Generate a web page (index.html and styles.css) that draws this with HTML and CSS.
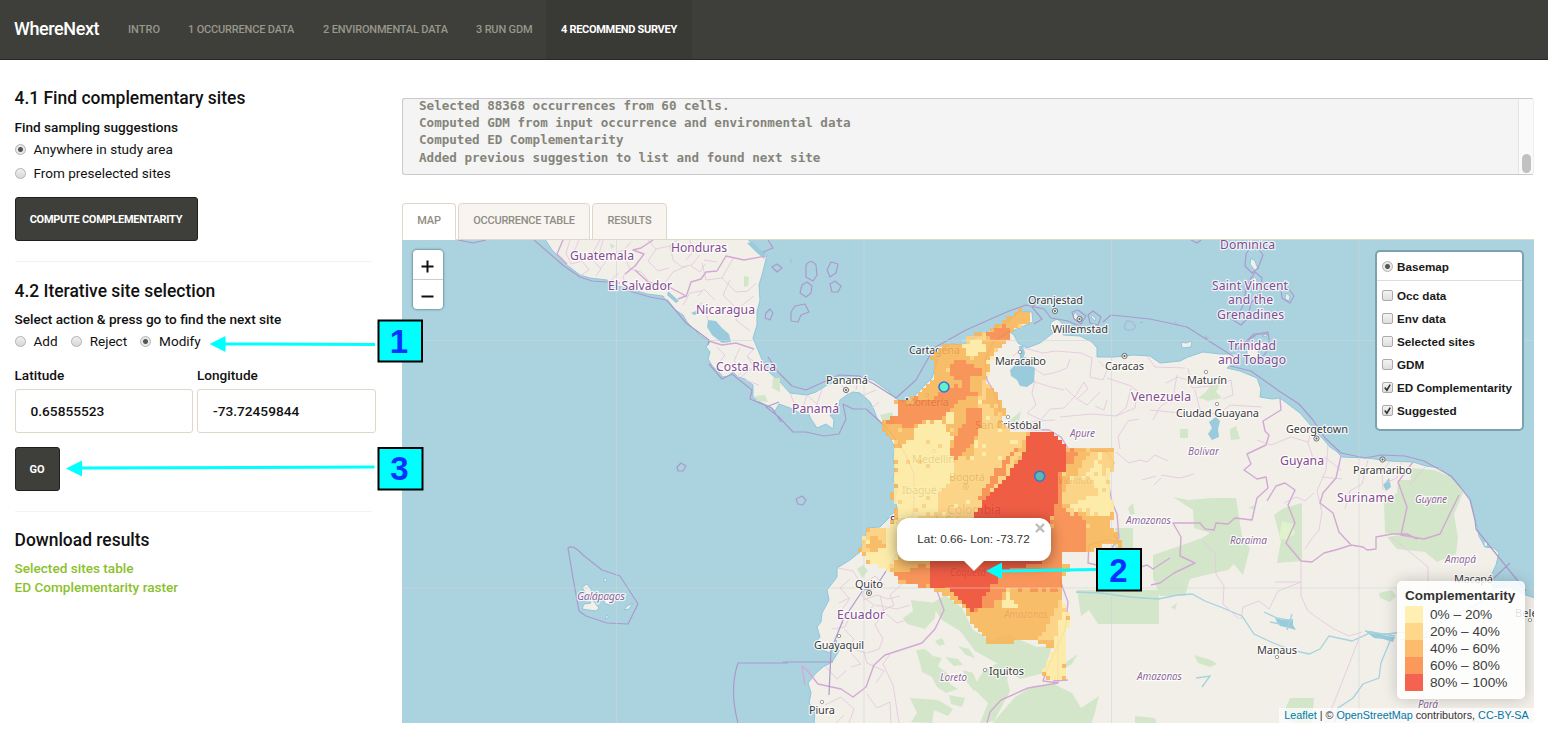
FILE: index.html
```html
<!DOCTYPE html>
<html lang="en">
<head>
<meta charset="utf-8">
<title>WhereNext</title>
<link rel="stylesheet" href="styles.css">
</head>
<body>
<nav class="navbar">
  <span class="brand">WhereNext</span>
  <a class="nav-item intro">INTRO</a>
  <a class="nav-item occ">1 OCCURRENCE DATA</a>
  <a class="nav-item env">2 ENVIRONMENTAL DATA</a>
  <a class="nav-item run">3 RUN GDM</a>
  <a class="nav-item active">4 RECOMMEND SURVEY</a>
</nav>
<div class="page">
  <aside class="sidebar">
    <h2>4.1 Find complementary sites</h2>
    <p class="label">Find sampling suggestions</p>
    <div class="choice"><i class="radio on"></i>Anywhere in study area</div>
    <div class="choice"><i class="radio"></i>From preselected sites</div>
    <button class="btn compute">COMPUTE COMPLEMENTARITY</button>
    <hr>
    <h2 class="iter">4.2 Iterative site selection</h2>
    <p class="label sel">Select action &amp; press go to find the next site</p>
    <div class="inline-choices">
      <div class="choice"><i class="radio"></i>Add</div>
      <div class="choice"><i class="radio"></i>Reject</div>
      <div class="choice"><i class="radio on"></i>Modify</div>
    </div>
    <div class="coords">
      <div class="field"><p class="label">Latitude</p><div class="input">0.65855523</div></div>
      <div class="field"><p class="label">Longitude</p><div class="input">-73.72459844</div></div>
    </div>
    <button class="btn go">GO</button>
    <hr>
    <h2 class="dl">Download results</h2>
    <a class="link">Selected sites table</a>
    <a class="link">ED Complementarity raster</a>
  </aside>
  <main class="main">
    <div class="log">
      <pre>Selected 88368 occurrences from 60 cells.
Computed GDM from input occurrence and environmental data
Computed ED Complementarity
Added previous suggestion to list and found next site</pre>
      <div class="scroll"><i class="thumb"></i></div>
    </div>
    <div class="tabs">
      <span class="tab current">MAP</span>
      <span class="tab table">OCCURRENCE TABLE</span>
      <span class="tab results">RESULTS</span>
    </div>
    <div class="map">
      <svg class="tiles" viewBox="402 240 1132 483" width="1132" height="483">
        <rect class="sea" x="402" y="240" width="1132" height="483"/>
        <g class="land">
          <path d="M543 236L552 250 567 265 580 275 590 278 607 280 617 286 627 288 647 294 663 296 667 302 674 309 683 315 687 322 693 328 701 336 710 342 706 347 710 352 708 359 713 367 718 371 723 377 728 376 733 372 738 377 745 379 753 385 753 397 760 402 770 407 775 411 779 404 790 408 800 413 808 412 811 419 817 428 826 424 833 429 834 420 830 415 838 409 840 400 847 395 853 392 860 393 866 398 870 402 874 410 877 418 882 425 890 438 895 448 893 458 895 468 893 480 898 487 895 500 897 508 890 517 880 527 867 528 865 538 860 552 850 560 837 568 837 577 827 590 829 600 822 613 821 622 817 627 820 637 815 643 823 650 830 653 832 646 836 640 839 651 832 662 823 667 816 673 808 683 811 693 809 703 815 710 813 740H1550V603L1523 594 1510 587 1493 588 1491 576 1496 565 1499 553 1494 548 1485 547 1479 536 1476 523 1473 510 1470 498 1460 487 1457 483 1448 475 1440 468 1426 466 1413 462 1390 461 1367 458 1342 457 1336 451 1330 447 1323 439 1313 428 1300 413 1280 398 1272 399 1260 397 1261 389 1257 378 1240 371 1227 368 1237 360 1237 354 1220 354 1203 352 1188 357 1180 361 1160 363 1150 356 1133 355 1115 357 1097 357 1097 348 1092 342 1080 336 1063 335 1062 323 1057 319 1051 322 1050 328 1053 333 1040 343 1027 348 1018 343 1014 335 1010 332 1033 322 1032 312 1020 311 1009 321 987 332 963 345 950 344 938 358 932 378 921 389 913 398 903 402 895 398 888 391 873 380 860 377 845 378 827 385 816 392 807 395 790 393 780 382 770 373 763 362 758 350 753 338 757 325 757 312 760 300 759 285 762 275 767 255 753 245 745 236Z"/>
          <path d="M1251 258l4 3 3 8-3 2-5-7zM1254 276l3 4-1 9-4 3-1-8zM1286 293l4 3-1 5-4-2zM1247 347l15-5 2 3-6 6 1 7-12-1zM1262 336l6-3-2 4zM1075 312l4 5-1 5-5-5zM1092 315l4 4-1 2-4-4zM1181 342l5 1 6-2-1 6-9 1zM582 587l5-3 4 5 1 10 7 9-3 3-14-2 2-5 7-1-5-9zM605 599l7 1-3 5-5-2zM627 606l6-3-4 6-5 1zM604 579l2-1 1 3-3 1zM606 616l2-1v3l-3 1zM1484 540l4 3-1 4-3-1z"/>
        </g>
        <g class="lake">
          <path d="M1021 358l5-1 3 7 6 4-1 14-7 5-7-1-3-6-6-4-1-6 7-7zM1019 346h4l2 7-2 6h-3zM708 320l8 1 6 7 7 6 2 8-9 1-10-8-5-8zM691 313l5-2 3 3-5 1zM1209 422l7-5 4 4-2 8 1 8-7 3-4-6 4-6zM747 243l6-1 6 7 7 4-2 6-8-7zM668 291l11 10-3 2-9-8zM790 256l3 8-3-2zM1275 618l8 2 10-1 0 6 3 5-7-2-9-2-3-4zM1365 631l10 1 12 4 8 1-2 5-10-3-9-1zM1383 485l6-7 2 9-5 4z"/>
        </g>
        <g class="green">
          <path d="M1173 497l15 3 24-2 24 0 6 38 8 12-7 27-9-11-6 6-18 4-20 5-5 17-25 0-7-18V555l15-5 34-12 8-5-16-5-1-18z"/>
          <path d="M1284 508l18-5v58l-25 2 4-22-7-26zM1398 480l6 0 42 0 17 13-9 21 4 24-2 16-19 8-12-10-28-3-10-12 13-2-15-2-1-32 13-8z"/>
          <path d="M1412 468l22 2 17 7 12 15-17 40-13 8-34-4 7-24z"/>
          <path d="M1077 590h82v34h-61l-9-14-8 6zM1115 528h18v20h-18zM911 600l25 3-1 15-10 11-18-5-4-6 10-7zM945 595l17 13 11 22 18 10 15-6 31 13 15-1-8 27-24 6-18-13-27-15-15-20-18-11-11-16z"/>
          <path d="M984 670l16-8 12 4-5 13 3 12-9 17-7 13-14 2 8-20-15-15zM916 650l9-1 8 7 9 2-4 8 10 8 2 10 8 5-12 4-9-6-5-10-10-5-2-9zM945 657l13 2 5 6-9 1zM963 670l10 3 6 14-5 4-8-10zM949 695l16 3-3 9-11-3zM910 698l28 2 15 9-5 7-14-6-2 13-21-1 6-9zM935 641l7-3 3 6-6 2zM958 646l11 3 6 9-9-3z"/>
          <path d="M1015 697l18-11 21-2 18 9 9 15 18-12-5 20-4 10h-100zM1290 698h24l-2 30-25-8-3-8zM1194 655l17 5 6 4-7 3-12-4zM1135 716l20 2 3 10h-23z"/>
          <path d="M1180 429h8v9h-8zM1230 429l6-3 4 13-9 1-1-6zM1198 398l8-6 4-6 10-2-4 8 6 6-14 3-5-2zM773 378h7v14l-8-4zM755 396l10-1 3 7-11-1zM1379 593l13-3 4 6-6 6-10-4zM1248 508l6-3 2 5zM1171 607l6-4-2 7zM744 276l5 1-1 9-4 1zM880 415l12-3 3 10-9 7zM1010 420l11-9-2 10-8 4zM610 243l5 3-4 3zM696 305l8-3-3 4zM701 252l7-3 1 4z"/>
          <path d="M1063 664l15-10-6 10-9 5zM1128 508l5-5 2 11-5 1zM857 569l6-4 5 6-6 7z"/>
          <path class="lime" d="M1282 521l11 3 2 10-9 6-7-2z"/>
        </g>
        <g class="river">
          <path d="M1076 592l24 1 30 4 28 2 20-4 14-1 13 7 18 7 19 8 12 18 17 8 20 8 18 4 11-5 9-13 23 5 18-8 18 1 14-2 17 5 18 1M1390 641l-9 22-2 15-16 6-10 14-15 10-3 14M1400 640l22-4 32-22 21-8 20-17 10-12M1500 586l10-5 10 5 10 3M1365 631l30 5M1196 678l14-2-8 11"/>
          <path d="M1264 612l13 6 16 3M1270 622l10 2M1287 630l5-16"/>
        </g>
        <g class="province">
          <path d="M570 240l-4 13 5 11 11-3 7 9-9 6M579 240l-5 12 8 6 10-4 8-14M603 240l-4 14-8 4 10 11-5 7M600 269l8-10 8-6 7 4M616 253l8-3 7-8M624 256l6 13 11 3 7 8-1 12M632 268l-9 8 2 8M611 280l8-7M648 240l8 9-8 12 10 10 11-3M656 249l14-3 7-6M670 245l3 15 9 7 9-2M690 240l2 13-6 7M700 255l-9 11 9 6 5-8M717 262l-13-2M664 284l9-12 14-6M683 305l7-12 12-2M702 263l4 17 16-2 5-9M722 278l14 14 12-1 8-8M727 269l7-12M730 280l-7 15 14 14-1 11 14 11M737 309l17-13M715 300l-11-11-6 7M708 320l-4-13M717 347l8 8-6 8M740 348l-6 13 9 9-6 7M754 349l-7 7 7 11-13 10M747 356l12 10M745 380l14 5M790 393l4 10 9 4 4-12M807 395l10 9-3 9M817 404l5-15M840 383l9 12M858 378l-2 12M876 390l-12 5M879 402l-7 6"/>
          <path d="M1013 356l11-8 19 5 12-2 26 2 11 5M1035 369l9 6 13-3 10-4 3-9M1092 358l-2 19 13 3 4-10-8-9M1035 380l-3 13 4 12-9 8 14 7 9-11 14-1 12-13 8-13 4 7-10 9M1065 388l11 10 11 7 13-13M1035 382l16 5 13 3M1107 378l24 8 9 7M1095 406l9 4 3-10M1060 417l31-3 25 2 19-8 2-15M1116 416l10-8 5-20M1012 428l24-7 19-1M1120 449l-2-12 10-16 11-2M1116 452l13 11 11-3 7 2 8-7 13 6"/>
          <path d="M1147 356l8 11 30 1M1166 383l12-6 22 7M1188 368l4 20 18-2 21-6 2 15-10 4M1195 390l5 20 18 5 12-10 32 2M1150 410l31 3 8 4M1177 375l-4 23-13 9-7 13M1152 401l14-4 6 6M1161 475l19 3 14-4M1161 478l-7 7M1142 480l14-4M1313 425l-5 18 5 15 13 0 15 12M1308 442l-17-5-20 8-14-5M1328 445l-2 25-9 21 5 21-3 18-9 11-5 8M1390 461l-8 11 1 18M1368 460l-6 24-12 7-5 18M1402 461l-5 17-12 5M1425 467l-15 18M1342 479l-20-2M1284 503l12-6 9 4 9-8M1203 541l12 12 1 21 8 12-1 18 16 15M1241 619l2-12 16-6 10 8 9-18 23-9M1275 582h26M1301 561v35l7 15 14 10 12 8 15 7 13-4M1360 636l-14 36-20 51M1391 537l20 16 17 14v20"/>
          <path d="M838 568l15 3 9 14 13-9 10 9M850 579l-10 9 9 10-10 5M867 580l-5 16 12 9-11 12-13-1-5 11-13 2M850 598l-9 13 2 13M863 600l14-5 11 4 12-3M880 595l4 17-9 13 8 14-4 10-12 4M904 582l-14 13 4 10-18 9M875 605l22 4 13-4M884 612l13 11 13-4M844 629l10 10-6 11 13 14-10 3M861 641l6 22 17 8-8 12M866 653l-14-4M890 654l-7 10 10 21 6 38M826 667l11 12 9-8M825 705l16-8 13 12-5 14M867 694l10 14 13-6 1 21M836 723l8-8"/>
        </g>
        <g class="border">
          <path d="M563 240l-6 14 10 10M653 240l-12 8-8 2 11 4-9 12-10 8M635 270l13 12 21 5 17 9-8 3M686 297l5-15 10-3 5-7 11-1 9-15 18 4 22-4M709 341l13 4 14-2 18 6"/>
          <path d="M1010 331l-17 11-8 18 2 20 6 10 6 14 3 21 9 4 38 1 12 7 8 13 37 1 8 12-7 14 5 25 5 12 2 24-18 25M1113 534l7 8-14-2-17 5-1 18 13 3 10 1 20 3 16-5 6 4 17-11M1060 580l8 22-3 28-16 34-6 17 15 2v-50"/>
          <path d="M1280 398l1 12-18 11 2 10 4 4-3 10-19 9 4 10-7 6 13 9 9-2 2 11-11 10-5 22-17-2-7 6-12-1-2 7-9-1-5-6-27 0 8 14-1 19 15 7-21 10-14 10-9 2M1267 501l9-15 9-3 10 7-7 15 7 18-9 20 15 18 11 1 12-9 15-4 12-4 12 2 4 3 9-1v-12l16-3 15 0 10 5M1341 456l-5 22-13 15-3 10 13 10 6 19 13 14M1413 462l-15 20 9 25-6 28 23 4 16-5 19-39"/>
          <path d="M937 591l7 19-9 19-13 14-37 12-11 10-8 22-13 10-12-8-23-5-12-15-4-3 3 19M1058 683l-30 5-27 12-11 12-3 11M1053 681l15-1"/>
        </g>
        <g class="maritime">
          <path d="M458 240l15 3 13-3M534 240l30 26 16 11 12 4 28 2M629 291l21 6 17 3 19 23 23 17-1 5M709 364l13 15 10-5 20 16-2 9 22 9 9 14M768 357l10 15 14 14 14 4 33-15 20 1 15 8 22 14 20-18 18-32 32-18 43-19 17-6 18 4 7 9 17 3 20 9M779 402l-13 5 13 10 14 15 13 0 18 4 15-2 7-15-3-15 10 5 13 0 20 18 10 13 10 15 8 19 0 28-2 24-13 25-20 31-2 6-14 2-20 30-12 30 -2 45M783 662h50M1040 300l-8 7 10 12-8 5M1103 322l8-7 39 4 37 8 33 21 16 10M1230 366l21 5 28 20 20 13 14 16 12 18 16 15 24 5 16-3 24 1 19 5 27 15 10 12 9 12 5 20 1 9 50 62M1268 334h-14l-17 16M1492 580l18-17"/>
          <path d="M568 548q5-4 15 7l19 15 18 6 18 28-10 20-21-1-21-7-7-5-6-33zM738 723q-9-34 0-60h50M677 467l4-4 5 3-3 5-5 0zM796 499l6-3 4 4-3 5-5-1zM806 265q5-7 10 0l1 10-4 6-7-4zM827 270l4-8 7 2-2 9-6 4zM802 285l5-3 5 4-1 7-5 4-6-4zM830 284l5-3 6 5-3 6-6 0zM791 312l4-6 10-2 4 8-8 3-3 7-7-1zM768 240l5 8-10 4M772 267l5-3 5 4-5 4zM766 313l4-4 3 4-3 7-5-2zM1246 254l4-6h8l5 7-5 13-6 5-7-7zM1251 278l4-6 7 6-2 15-9 10-4 16-6 6-8-5 9-12 5-22zM1281 289l7-1 6 8-4 7-8-5zM1072 312l6-2 8 6-5 8-7-5zM1088 315l5-4 8 6-3 8-8-2zM1191 240l6 3 4-3M1247 342l10-8 11-2 2 15-12 16"/>
          <path class="faint" d="M1126 322q4-3 8 2t-4 6-4-8M1140 323l3-1M1175 322l2 3M1205 336l3 3"/>
        </g>
        <g class="grat"><path d="M402 340.5h1132M402 588h1132M616.5 240v483M864 240v483M1111.5 240v483M1359 240v483"/></g>
        <g class="names country">
          <text x="570" y="260" textLength="64">Guatemala</text><text x="671" y="252" textLength="56">Honduras</text><text x="608" y="290" textLength="64">El Salvador</text><text x="696" y="314" textLength="59">Nicaragua</text><text x="716" y="371" textLength="60">Costa Rica</text><text x="792" y="413" textLength="47">Panamá</text><text x="1131" y="401" textLength="60">Venezuela</text><text x="1280" y="465" textLength="44">Guyana</text><text x="1337" y="502" textLength="57">Suriname</text><text x="837" y="619" textLength="48">Ecuador</text><text x="947" y="514" textLength="54">Colombia</text><text x="1220" y="249.500" textLength="55">Dominica</text><text x="1212" y="290" textLength="76">Saint Vincent</text><text x="1228" y="304" textLength="45">and the</text><text x="1217" y="319" textLength="67">Grenadines</text><text x="1228" y="350" textLength="48">Trinidad</text><text x="1218" y="364" textLength="68">and Tobago</text>
        </g>
        <g class="names region">
          <text x="1070" y="437" textLength="25">Apure</text><text x="1188" y="455" textLength="31">Bolívar</text><text x="1058" y="484" textLength="34">Vichada</text><text x="1126" y="524" textLength="45">Amazonas</text><text x="1230" y="544" textLength="37">Roraima</text><text x="1415" y="503" textLength="32">Guyane</text><text x="1445" y="563" textLength="31">Amapá</text><text x="1137" y="680" textLength="45">Amazonas</text><text x="940" y="681" textLength="27">Loreto</text><text x="950" y="576" textLength="36">Caquetá</text><text x="1004" y="618" textLength="44">Amazonas</text><text x="1418" y="708" textLength="20">Pará</text><text class="gal" x="577" y="600" textLength="48">Galápagos</text>
        </g>
        <g class="names city">
          <text x="1028" y="304" textLength="55">Oranjestad</text><text x="1052" y="333" textLength="56">Willemstad</text><text x="909" y="354" textLength="51">Cartagena</text><text x="995" y="365" textLength="51">Maracaibo</text><text x="1105" y="370" textLength="39">Caracas</text><text x="826" y="384" textLength="42">Panamá</text><text x="905" y="406" textLength="44">Montería</text><text x="975" y="429" textLength="66">San Cristóbal</text><text x="912" y="463" textLength="43">Medellín</text><text x="949" y="481" textLength="36">Bogotá</text><text x="902" y="494" textLength="35">Ibagué</text><text x="890" y="524" textLength="71">Santiago de Cali</text><text x="1187" y="384" textLength="40">Maturín</text><text x="1176" y="417" textLength="83">Ciudad Guayana</text><text x="1286" y="433" textLength="62">Georgetown</text><text x="1353" y="474" textLength="59">Paramaribo</text><text x="855" y="588" textLength="28">Quito</text><text x="814" y="649" textLength="50">Guayaquil</text><text x="809" y="714" textLength="26">Piura</text><text x="989" y="675" textLength="35">Iquitos</text><text x="1257" y="654" textLength="40">Manaus</text><text x="1454" y="583" textLength="39">Macapá</text><text x="1515" y="617" textLength="33">Belém</text>
        </g>
        <g class="dots"><circle cx="1020" cy="352" r="1.7"/><circle cx="1008" cy="417" r="1.7"/><circle cx="1206" cy="372" r="1.7"/><circle cx="1217" cy="404" r="1.7"/><circle cx="839" cy="636" r="1.7"/><circle cx="822" cy="702" r="1.7"/><circle cx="985" cy="670" r="1.7"/><circle cx="1277" cy="657" r="1.7"/><circle cx="1530" cy="620" r="1.7"/><circle cx="927" cy="395" r="1.7"/><circle cx="941" cy="490" r="1.7"/><circle cx="934" cy="451" r="1.7"/></g>
        <g class="capitals"><circle cx="1055" cy="311" r="2.6"/><circle cx="1079.500" cy="319" r="2.6"/><circle cx="1124.500" cy="356" r="2.6"/><circle cx="846" cy="390" r="2.6"/><circle cx="1316.500" cy="438.500" r="2.6"/><circle cx="1382.500" cy="459.500" r="2.6"/><circle cx="869" cy="593" r="2.6"/><circle cx="966" cy="487" r="2.6"/></g>
        <g class="centres"><circle cx="1055" cy="311" r="1"/><circle cx="1079.500" cy="319" r="1"/><circle cx="1124.500" cy="356" r="1"/><circle cx="846" cy="390" r="1"/><circle cx="1316.500" cy="438.500" r="1"/><circle cx="1382.500" cy="459.500" r="1"/><circle cx="869" cy="593" r="1"/><circle cx="966" cy="487" r="1"/></g>
        <g id="raster" class="raster"></g>
        <path class="rastergrid" d="M962 340.500h46M945 588h116"/>
        <g class="sites"><circle cx="944" cy="387" r="5" fill="#63efd0"/><circle cx="1039.700" cy="476.200" r="5" fill="#5fb9ab"/></g>
      </svg>
      <div class="zoomctl">
        <span><svg width="13" height="13"><path d="M6.500 .5v12M.5 6.500h12"/></svg></span>
        <span><svg width="13" height="13"><path d="M.5 6.500h12"/></svg></span>
      </div>
      <div class="popup">Lat: 0.66- Lon: -73.72<svg class="close" width="10" height="10"><path d="M1 1l8 8M9 1l-8 8"/></svg><i class="tip"></i></div>
      <div class="layers">
        <div class="base"><i class="radio on"></i>Basemap</div>
        <div class="layer"><i class="check"></i>Occ data</div>
        <div class="layer"><i class="check"></i>Env data</div>
        <div class="layer"><i class="check"></i>Selected sites</div>
        <div class="layer"><i class="check"></i>GDM</div>
        <div class="layer"><i class="check"><svg viewBox="0 0 10 10"><path d="M2 5l2.300 3L8 1.800"/></svg></i>ED Complementarity</div>
        <div class="layer"><i class="check"><svg viewBox="0 0 10 10"><path d="M2 5l2.300 3L8 1.800"/></svg></i>Suggested</div>
      </div>
      <div class="legend">
        <b>Complementarity</b>
        <div class="row"><i class="c1"></i>0% – 20%</div>
        <div class="row"><i class="c2"></i>20% – 40%</div>
        <div class="row"><i class="c3"></i>40% – 60%</div>
        <div class="row"><i class="c4"></i>60% – 80%</div>
        <div class="row"><i class="c5"></i>80% – 100%</div>
      </div>
      <div class="attrib"><a>Leaflet</a> | © <a>OpenStreetMap</a> contributors, <a>CC-BY-SA</a></div>
    </div>
  </main>
</div>
<svg class="callouts" width="1548" height="750">
  <path class="shaft" d="M224 344L375 344.500M81 468L374.500 467M1001 571L1096 569.500"/>
  <path class="head" d="M209.500 344l16-8v16zM66 468.500l16-8v16zM986 571l16-8.500v16.500z"/>
  <rect x="378.500" y="320.500" width="43.500" height="41"/><rect x="378.500" y="448" width="44" height="41.500"/><rect x="1097" y="549" width="44" height="41.500"/>
  <text x="399" y="353">1</text><text x="399.500" y="480">3</text><text x="1118.500" y="582">2</text>
</svg>
<script src="raster.js"></script>
</body>
</html>
```
FILE: styles.css
```css
* { box-sizing: border-box; }
body { margin: 0; width: 1548px; height: 750px; overflow: hidden; position: relative; background: #fff; color: #111; font-family: Roboto, sans-serif; font-size: 13px; }
h2, p, pre, hr { margin: 0; }
.navbar { display: flex; height: 60px; background: #3e3f3a; border-bottom: 1px solid #292a26; line-height: 59px; color: #98978b; font-size: 11px; font-weight: 500; letter-spacing: -.18px; }
.brand { width: 113px; padding-left: 14px; color: #fff; font-size: 18px; font-weight: 500; letter-spacing: -.4px; line-height: 57px; }
.nav-item { padding-left: 15px; white-space: nowrap; }
.intro { width: 60px; letter-spacing: 0; }
.occ { width: 135px; }
.env { width: 153px; }
.run { width: 85px; }
.active { width: 146px; background: #393a35; color: #fff; font-weight: 700; letter-spacing: -.3px; }
.page { display: flex; }
.sidebar { width: 402px; padding: 28px 0 0 14.500px; }
h2 { font-size: 17.450px; line-height: 20px; font-weight: 500; }
.label { font-size: 13.600px; line-height: 18px; font-weight: 500; margin-top: 10px; margin-bottom: 1px; }
.choice { display: flex; align-items: center; height: 24px; gap: 8px; font-size: 13.550px; }
.radio { display: block; flex: none; width: 11px; height: 11px; border-radius: 50%; border: 1px solid #b2b2b2; background: linear-gradient(#efefef, #d8d8d8); }
.radio.on { background: radial-gradient(circle, #555 0 2px, #e8e8e8 3px); }
.btn { display: block; border: 1px solid #20211e; border-radius: 3px; background: #3e3f3a; color: #fff; font: 700 11px Roboto, sans-serif; padding: 0; }
.compute { width: 183px; height: 44px; margin-top: 12px; letter-spacing: -.28px; }
hr { border: 0; height: 1px; width: 357px; background: #f5f3ef; margin-top: 20px; }
.iter { margin-top: 18.500px; }
.sel { margin-top: 9px; }
.inline-choices { display: flex; height: 24px; gap: 13px; margin-top: 1.500px; }
.coords { display: flex; gap: 4px; margin-top: 13px; }
.field { width: 178.500px; }
.field .label { margin: 0 0 5px; }
.input { height: 44px; border: 1px solid #dfd7ca; border-radius: 3px; padding-left: 15px; font-size: 13.700px; font-weight: 500; line-height: 42px; }
.go { width: 45px; height: 44px; margin-top: 14px; }
.dl { margin: 18px 0 9px; }
.link { display: block; color: #8bc12c; font-size: 13.600px; font-weight: 500; line-height: 18.500px; }
.main { width: 1132px; padding-top: 38px; }
.log { display: flex; height: 77px; border: 1px solid #cacaca; border-right-color: #eee; border-radius: 3px; background: #f4f4f4; overflow: hidden; }
.log pre { flex: 1; padding-left: 16px; font: 700 12.580px/17.200px "DejaVu Sans Mono", monospace; color: #85847a; margin-top: -2px; }
.scroll { width: 15px; background: #fafafa; border-left: 1px solid #e4e4e4; display: flex; align-items: flex-end; justify-content: center; }
.thumb { width: 9px; height: 19px; border-radius: 5px; background: #c1c1c1; margin-bottom: 1px; }
.tabs { display: flex; gap: 2px; height: 37px; margin-top: 28px; border-bottom: 1px solid #dfd7ca; }
.tab { height: 37px; border: 1px solid #dfd7ca; border-radius: 4px 4px 0 0; background: #f8f5f0; color: #8e8c84; font-size: 11px; font-weight: 500; line-height: 34px; text-align: center; letter-spacing: -.1px; }
.current { width: 54px; background: #fff; border-bottom-color: #fff; }
.table { width: 132px; letter-spacing: -.25px; }
.results { width: 75px; }
.map { position: relative; width: 1132px; height: 483px; overflow: hidden; font-family: "Liberation Sans", Arial, sans-serif; }
.tiles { display: block; height: 483px; }
.sea { fill: #abd3df; }
.land { fill: #f2efe9; stroke: #8fc6da; stroke-width: 1; }
.lake { fill: #99cbdc; }
.green { fill: #d3e6ca; }
.lime { fill: #e0f2cb; }
.river { fill: none; stroke: #a5d2df; stroke-width: 1.300; }
.province { fill: none; stroke: #e3c9e0; stroke-width: .9; }
.border { fill: none; stroke: #d3a9d3; stroke-width: 1.400; stroke-linejoin: round; }
.maritime { fill: none; stroke: #aa9acb; stroke-width: 1.200; stroke-linejoin: round; }
.faint { opacity: .5; }
.grat { fill: none; stroke: #ccd6d7; stroke-width: .8; opacity: .7; }
.names { font-family: "Noto Sans", sans-serif; paint-order: stroke; stroke: rgba(255,255,255,.75); stroke-width: 2.500px; stroke-linejoin: round; transform: translateY(-.5px); }
.country { fill: #844b90; font-size: 12.200px; }
.region { fill: #8d6599; font-size: 10.200px; font-style: italic; }
.gal { font-size: 11px; }
.city { fill: #3a3a3a; font-size: 11px; }
.dots { fill: #fff; stroke: #777; stroke-width: .7; }
.capitals { fill: #eee; stroke: #555; stroke-width: .8; }
.centres { fill: #555; }
.raster { opacity: .86; shape-rendering: crispEdges; }
.rastergrid { stroke: #fff; opacity: .2; stroke-width: 2; }
.sites { stroke: #3476d6; stroke-width: 1.600; }
.zoomctl { position: absolute; left: 11px; top: 10px; width: 29.500px; height: 59px; border-radius: 4px; background: #fff; box-shadow: 0 0 2px 1px rgba(50,80,90,.45); }
.zoomctl span { display: flex; align-items: center; justify-content: center; height: 29.500px; padding-top: 5px; }
.zoomctl span:first-child { border-bottom: 1px solid #ccc; }
.zoomctl path { stroke: #111; stroke-width: 2; }
.popup { position: absolute; left: 495px; top: 278px; width: 154px; height: 43px; border-radius: 12px; background: #fff; box-shadow: 0 3px 14px rgba(0,0,0,.4); color: #333; font-size: 11.750px; line-height: 42px; text-align: center; padding-right: 1px; }
.close { position: absolute; right: 6px; top: 5px; }
.close path { stroke: #bbb; stroke-width: 2.300; }
.tip { position: absolute; left: 67px; top: 42.500px; border: 10px solid transparent; border-top-color: #fff; border-bottom: 0; }
.layers { position: absolute; left: 973px; top: 10px; width: 149px; height: 181px; border: 2px solid #7ba2ad; border-radius: 5px; background: #fff; font-size: 11.700px; font-weight: 700; color: #1a1a1a; }
.base { display: flex; align-items: center; gap: 4px; height: 28.500px; border-bottom: 1px solid #ddd; padding: 1px 0 0 5px; margin-bottom: 3px; }
.layer { display: flex; align-items: center; gap: 4px; height: 23px; padding-left: 5px; }
.check { display: block; width: 11px; height: 11px; border: 1px solid #aaa; border-radius: 2px; background: linear-gradient(#f3f3f3, #dedede); }
.check svg { display: block; }
.check path { fill: none; stroke: #333; stroke-width: 1.800; }
.legend { position: absolute; left: 995px; top: 340.500px; width: 128px; height: 118px; padding: 6px 8px; border-radius: 5px; background: rgba(255,255,255,.85); box-shadow: 0 0 15px rgba(0,0,0,.2); color: #3c3c3c; font-size: 13.650px; line-height: 17.200px; }
.legend b { display: block; color: #333; font-size: 13.500px; height: 19px; }
.row { display: flex; height: 17.200px; }
.row i { width: 18px; height: 17.200px; margin-right: 7px; }
.c1 { background: #ffefb0; }
.c2 { background: #fed78b; }
.c3 { background: #fdbc6d; }
.c4 { background: #fb985b; }
.c5 { background: #f36350; }
.attrib { position: absolute; right: 0; bottom: 0; height: 15px; width: 255px; background: rgba(255,255,255,.7); color: #333; font-size: 10.800px; line-height: 14px; text-align: center; white-space: nowrap; }
.attrib a { color: #0078a8; }
.callouts { position: absolute; left: 0; top: 0; }
.shaft { stroke: #0ff; stroke-width: 3; }
.head { fill: #0ff; }
.callouts rect { fill: #0ff; stroke: #000; stroke-width: 2; }
.callouts text { fill: #0433ff; font: 700 33px "Liberation Sans", Arial, sans-serif; text-anchor: middle; }
```
FILE: raster.js
```js
// Complementarity classes as outlines; later entries paint over earlier ones.
const outline = '1021,309 1031,314 1032,322 1010,332 1008,342 993,356 987,382 998,395 1003,407 1008,410 1002,420 1010,432 1054,433 1067,449 1116,450 1113,465 1109,489 1116,515 1107,523 1118,535 1122,548 1110,541 1090,553 1064,553 1064,563 1075,568 1063,575 1062,597 1069,615 1064,681 1052,682 1042,672 1053,650 1038,641 1015,642 990,645 974,626 961,605 930,588 900,582 890,571 867,562 859,551 866,528 890,527 898,504 890,496 896,485 894,444 882,430 882,420 900,415 895,400 912,398 933,378 932,358 946,344 964,345 966,335 987,332';
const classes = [
  [3, outline],
  [2, '987,370 992,385 1004,410 998,425 1030,433 1012,470 985,500 975,520 900,530 894,450 925,430 950,455 970,460 980,425 977,405'],
  [3, '990,378 1004,400 1008,412 996,415 985,404'],
  [1, '895,448 912,441 916,425 940,421 950,434 952,462 958,470 950,482 930,500 950,505 925,512 905,530 897,552 892,575 864,558 868,545 885,548 885,530 900,516 895,500'],
  [1, '962,341 983,340 983,350 978,359 967,357'], [1, '988,358 994,355 992,374 988,374'],
  [2, '942,497 958,500 955,520 935,518'], [2, '958,335 986,335 986,340 960,341'],
  [2, '864,530 885,528 882,546 868,552 860,552'],
  [3, '868,540 878,536 880,548 866,552'],
  [4, '984,332 1010,326 1010,342 988,340'], [4, '950,366 960,359 967,366 979,367 982,374 970,378 971,389 982,395 963,400 956,391 963,383 950,376'],
  [4, '882,424 896,415 896,401 910,405 915,397 931,400 940,391 953,386 963,391 958,402 946,412 940,421 927,418 913,427 899,429 882,423'],
  [3, '880,422 905,427 908,440 895,442 885,432'],
  [4, '967,409 982,407 982,425 973,440 966,451 955,463 951,451 963,424'],
  [1, '947,412 954,411 954,420 946,425'],
  [4, '1067,449 1080,454 1068,466 1066,475 1064,505 1086,522 1086,553 1062,565 1062,588 1000,588 1000,550 1050,545 1052,515 1058,500 1057,470 1065,470'],
  [4, '1005,456 1016,450 1000,480 985,500 978,500'],
  [5, '1028,436 1030,434 1054,433 1066,447 1067,470 1058,473 1058,500 1051,520 1042,562 1000,572 999,585 989,597 974,613 961,601 952,590 930,588 928,558 960,540 982,503 998,487 1023,456'],
  [4, '894,576 927,563 930,590 915,587'], [4, '985,595 1001,578 1060,570 1062,587 1053,592 1010,590 992,606 974,614'],
  [2, '1078,465 1090,455 1116,450 1113,466 1109,490 1116,515 1070,515 1062,490'],
  [1, '1062,503 1085,500 1098,490 1090,480 1075,478 1100,464 1109,466 1109,489 1115,508 1112,519 1090,513'],
  [3, '1064,468 1078,456 1084,460 1075,478 1062,490'],
  [1, '1005,586 1010,590 1010,600 1018,603 1016,608 1002,608 1006,598'],
  [1, '1063,600 1070,615 1064,682 1052,682 1042,672 1052,651 1056,622'],
  [2, '1061,598 1065,606 1055,640 1040,640 1048,625'],
  [3, '1060,560 1078,565 1062,575']
];
const colors = ['', '#ffeb9f', '#fed077', '#fab555', '#f98743', '#ef462b'];
const inside = (x, y, p) => {
  let hit = false;
  for (let i = 0, j = p.length - 1; i < p.length; j = i++) {
    if ((p[i][1] > y) !== (p[j][1] > y) && x < (p[j][0] - p[i][0]) * (y - p[i][1]) / (p[j][1] - p[i][1]) + p[i][0]) hit = !hit;
  }
  return hit;
};
const noise = (a, b) => { const v = Math.sin(a * 12.9898 + b * 78.233) * 43758.5453; return v - Math.floor(v); };
const shapes = classes.map(([c, s]) => [c, s.split(' ').map(q => q.split(',').map(Number))]);
const edge = shapes[0][1], step = 4;
let html = '';
for (let y = 308; y < 684; y += step) {
  let run = null;
  for (let x = 858; x < 1128; x += step) {
    let c = 0;
    if (inside(x + 2, y + 2, edge)) {
      const jx = (noise(x, y) - .5) * 4, jy = (noise(y, x) - .5) * 4;
      c = 3;
      shapes.forEach(([k, p], i) => {
        const j = i === 0 || k === 5 ? 0 : 1;
        if (inside(x + 2 + jx * j, y + 2 + jy * j, p)) c = k;
      });
      const n = noise(x + 7, y + 3);
      if (c < 3 && n > .95 && y < 590) c = 3 - c;
      if (c === 3 && n > .96 && y < 560) c = 2;
    }
    if (run && run.c === c) run.w += step;
    else {
      if (run && run.c) html += `<rect x="${run.x}" y="${y}" width="${run.w}" height="${step}" fill="${colors[run.c]}"/>`;
      run = { x, c, w: step };
    }
  }
  if (run && run.c) html += `<rect x="${run.x}" y="${y}" width="${run.w}" height="${step}" fill="${colors[run.c]}"/>`;
}
document.getElementById('raster').innerHTML = html;
```
